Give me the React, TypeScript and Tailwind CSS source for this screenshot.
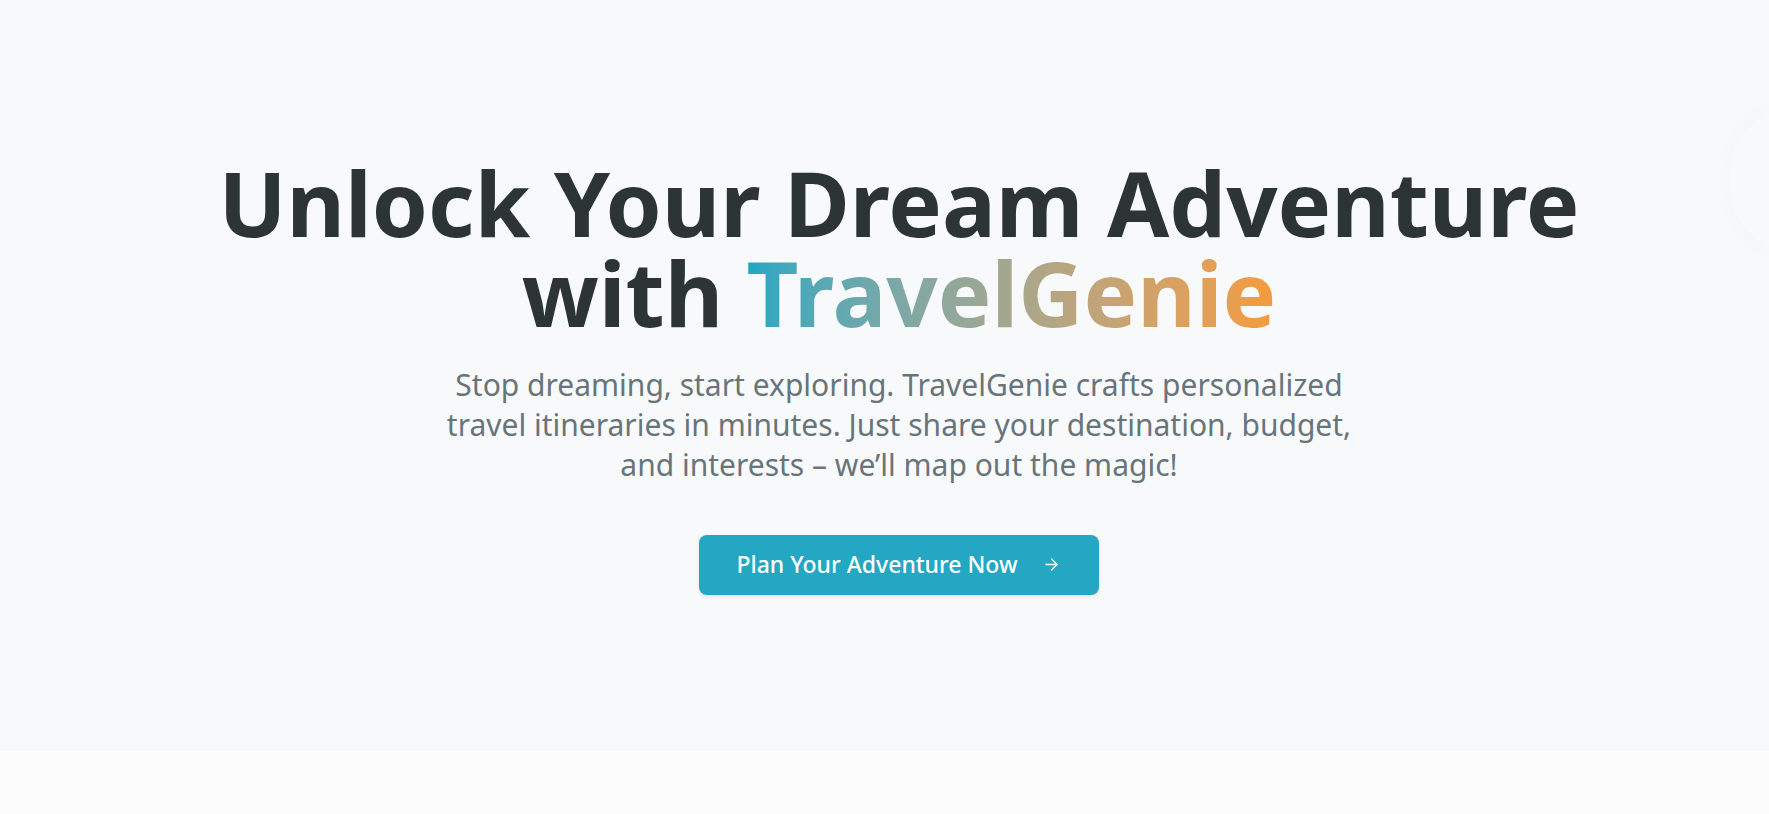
import { ArrowRight } from "lucide-react";

export default function App() {
  return (
    <div className="min-h-screen bg-[#fbfcfb] font-['Noto_Sans',sans-serif]">
      {/* Hero */}
      <section className="relative flex h-[751px] items-center justify-center overflow-hidden bg-[#f8f9fb] pl-[29px]">
        {/* faint decorative blob at the right edge */}
        <div className="absolute right-[-170px] top-[105px] h-[150px] w-[210px] rounded-full bg-[#f8f9fb] shadow-[0_0_30px_rgba(0,0,0,0.025)]"></div>

        <div className="relative flex flex-col items-center text-center">
          <h1 className="text-[90px] font-bold leading-[90px] text-[#2d3436]">
            Unlock Your Dream Adventure
            <br />
            with{" "}
            <span className="bg-gradient-to-r from-[#1ea7c3] to-[#f59b3a] bg-clip-text text-transparent">
              TravelGenie
            </span>
          </h1>

          <p className="mt-[28px] max-w-[935px] text-[30px] leading-[40px] text-[#67757a]">
            Stop dreaming, start exploring. TravelGenie crafts personalized
            travel itineraries in minutes. Just share your destination, budget,
            and interests – we’ll map out the magic!
          </p>

          <button className="mt-[50px] flex h-[60px] w-[400px] items-center justify-center gap-[25px] rounded-lg bg-[#23a7c3] text-[23px] font-medium text-white shadow-[0_2px_4px_rgba(0,0,0,0.08)]">
            Plan Your Adventure Now
            <ArrowRight size={19} strokeWidth={1.7} />
          </button>
        </div>
      </section>
    </div>
  );
}
